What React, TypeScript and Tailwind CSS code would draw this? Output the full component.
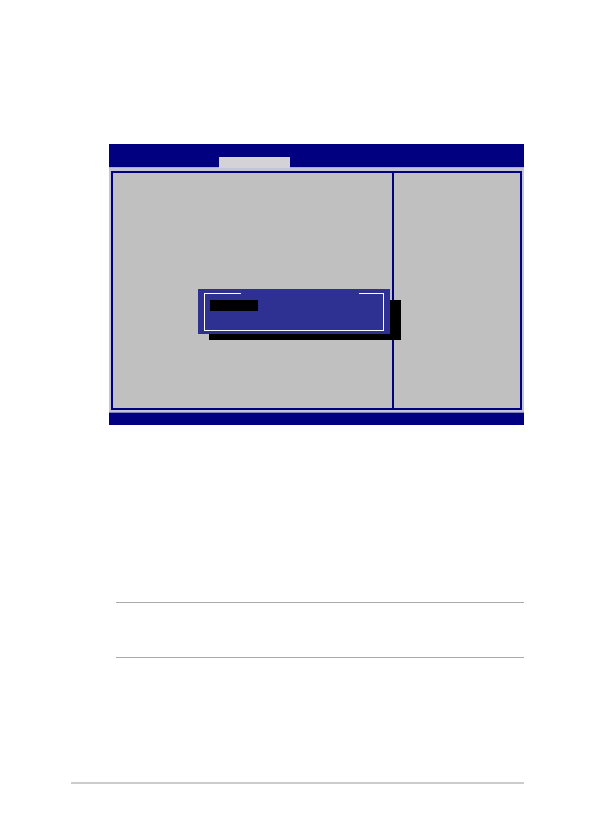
import React from 'react';

function MenuBar() {
  return (
    <nav aria-label="Setup menu" className="flex h-6 items-end border-b border-[#a9a9d4] bg-[#000080] pl-[110px]">
      <button
        type="button"
        aria-label="Current menu"
        className="relative -mb-px h-[11px] w-[71px] bg-[#d4d2d6]"
      />
    </nav>
  );
}

function OptionsDialog() {
  return (
    <div role="dialog" aria-label="Options" className="absolute top-[121px] left-[89px] w-[192px]">
      {/* hard drop shadow */}
      <div className="absolute top-[11px] -right-[11px] -bottom-[6px] left-[11px] bg-black" />
      <div className="relative bg-[#2e3192] px-[6px] pt-1 pb-[3px]">
        <fieldset className="h-[38px] border border-white px-[5px]">
          <legend className="ml-[31px] h-px w-[118px]" />
          <button
            type="button"
            aria-label="Selected option"
            className="mt-[6px] block h-[11px] w-12 bg-black"
          />
        </fieldset>
      </div>
    </div>
  );
}

function SetupScreen() {
  return (
    <section aria-label="Setup utility" className="ml-[38px]">
      <MenuBar />
      <div className="relative bg-[#c4c4d6] px-[2px] pt-[3px] pb-[2px]">
        <div className="flex h-[239px] border-2 border-[#000080] bg-[#c0c0c0]">
          <main className="flex-1" />
          <aside className="w-32 border-l-2 border-[#000080]" />
        </div>
        <OptionsDialog />
      </div>
      <div className="h-[13px] border-t border-[#8080c0] bg-[#000080]" />
    </section>
  );
}

function Note() {
  return <div className="mt-[177px] ml-[45px] h-14 border-y border-[#aaaaaa]" />;
}

export default function App() {
  return (
    <div className="min-h-screen bg-white px-[71px] pt-36">
      <SetupScreen />
      <Note />
      <footer className="mt-[124px] border-t-2 border-[#cccccc]" />
    </div>
  );
}
